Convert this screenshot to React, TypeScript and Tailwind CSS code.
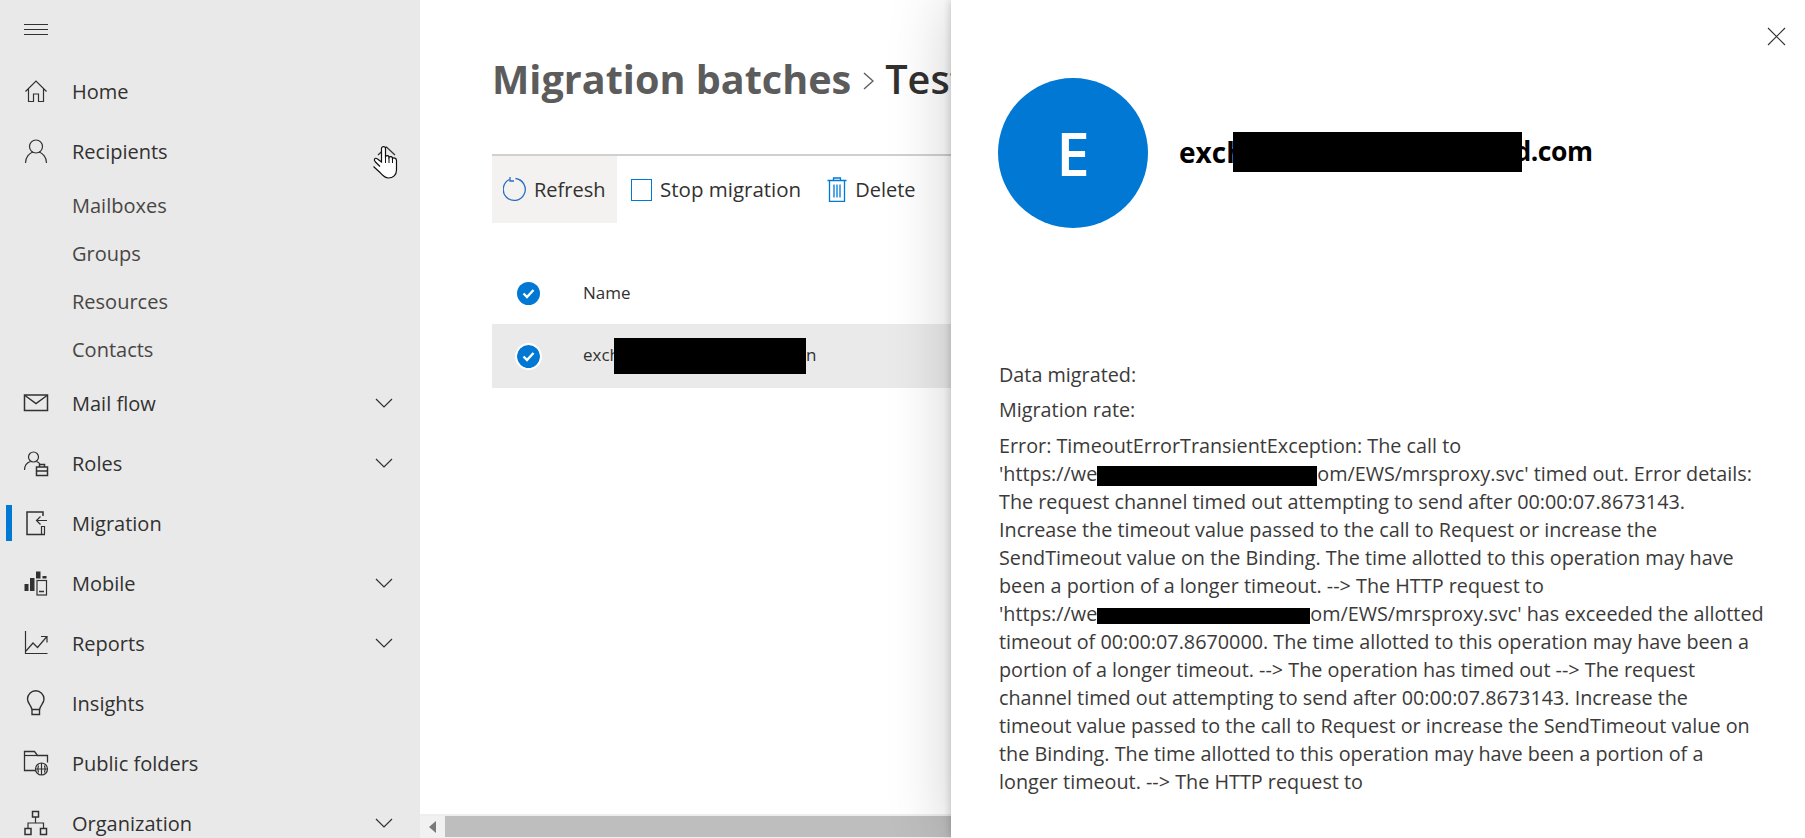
const Chevron = () => (
  <svg width="18" height="10" viewBox="0 0 18 10" fill="none" stroke="#323130" strokeWidth="1.2">
    <path d="M1 1l8 8 8-8" />
  </svg>
);

const icon = "h-6 w-6 shrink-0 overflow-visible";
const stroke = { fill: "none", stroke: "#323130", strokeWidth: 1.2 };

const HomeIcon = () => (
  <svg className={icon} viewBox="0 0 24 24" {...stroke}>
    <path d="M1.500 12.500L12 2l10.500 10.500M4.500 10v12.500h5V15h5v7.500h5V10" />
  </svg>
);
const PersonIcon = () => (
  <svg className={icon} viewBox="0 0 24 24" {...stroke}>
    <circle cx="12" cy="7.500" r="6.500" />
    <path d="M1.500 24c0-6 4-10 7.500-11M22.500 24c0-6-4-10-7.500-11" />
  </svg>
);
const MailIcon = () => (
  <svg className={icon} viewBox="0 0 24 24" fill="none" stroke="#323130" strokeWidth="1.500">
    <rect x="0.500" y="4" width="23" height="15.500" />
    <path d="M1 4.500l11 8 11-8" />
  </svg>
);
const RolesIcon = () => (
  <svg className={icon} viewBox="0 0 24 24" {...stroke}>
    <circle cx="9.500" cy="6" r="5" />
    <path d="M0.500 19c0-5 3-7.500 6-8.500M12.500 10.500c1.500.5 2.500 1.200 3.500 2.500" />
    <rect x="12.500" y="16" width="11" height="8.500" strokeWidth="1.500" />
    <path d="M15.500 16v-2.500h5V16M12.500 20h11" strokeWidth="1.500" />
  </svg>
);
const MigrationIcon = () => (
  <svg className={icon} viewBox="0 0 24 24" {...stroke}>
    <path d="M19 5V1H3v22.500h18" strokeWidth="1.500" />
    <path d="M23 9.500H12.500M16.500 5.500l-4 4 4 4" />
    <path d="M17.500 23v-7.500h3V23" />
  </svg>
);
const MobileIcon = () => (
  <svg className={icon} viewBox="0 0 24 24">
    <rect x="0.500" y="13" width="4" height="7" fill="#323130" />
    <rect x="6" y="7" width="4.500" height="13" fill="#323130" />
    <rect x="12" y="0.500" width="4.500" height="7" fill="#323130" />
    <rect x="18.500" y="5" width="4" height="2.500" fill="#323130" />
    <rect x="13" y="9.500" width="9.500" height="14.500" fill="none" stroke="#323130" strokeWidth="1.200" />
    <path d="M15 20.500h5" stroke="#323130" strokeWidth="1.500" />
  </svg>
);
const ReportsIcon = () => (
  <svg className={icon} viewBox="0 0 24 24" {...stroke}>
    <path d="M1.500 0v22.500h22" />
    <path d="M2 20l7-8 4.500 4.500L22.500 6M17 5.500h6v6" />
  </svg>
);
const BulbIcon = () => (
  <svg className={icon} viewBox="0 0 24 24" {...stroke}>
    <path d="M8 18.500C7 14 3.500 12.500 3.500 8a8.200 8.200 0 0 1 16.500 0c0 4.500-3.500 6-4.500 10.500z" strokeWidth="1.400" />
    <path d="M8 18.500v5h7.500v-5" strokeWidth="1.400" />
  </svg>
);
const FolderIcon = () => (
  <svg className={icon} viewBox="0 0 24 24" {...stroke}>
    <path d="M12 19.500H0.500V0.500h10l3 4h10v7" strokeWidth="1.300" />
    <path d="M0.500 4.500h13" />
    <circle cx="17.500" cy="18" r="6" />
    <path d="M11.500 18h12M17.500 12v12M14.500 14.500c-1 2.500-1 4.500 0 7M20.500 14.500c1 2.500 1 4.500 0 7" />
  </svg>
);
const OrgIcon = () => (
  <svg className={icon} viewBox="0 0 24 24" fill="none" stroke="#323130" strokeWidth="1.500">
    <rect x="8.500" y="0.500" width="6" height="5.500" />
    <rect x="1" y="17.500" width="6" height="6" />
    <rect x="16.500" y="17.500" width="6" height="6" />
    <path d="M11.500 6v6M4 17.500V12h15.500v5.500" strokeWidth="1.200" />
  </svg>
);

const rowBase = "flex h-[60px] items-center pl-6 pr-[27px] text-[20px] text-[#323130]";

function NavRow({ label, children, more, active }: { label: string; children: React.ReactNode; more?: boolean; active?: boolean }) {
  return (
    <div className={rowBase}>
      {active ? <div className="-ml-[18px] mr-3 h-9 w-1.5 bg-[#0078d4]" /> : null}
      {children}
      <span className="ml-6 flex-1 pt-0.5">{label}</span>
      {more ? <Chevron /> : null}
    </div>
  );
}

const subItems = ["Mailboxes", "Groups", "Resources", "Contacts"];

const errorLines: React.ReactNode[] = [
  "Error: TimeoutErrorTransientException: The call to",
  <>
    'https://we<span className="inline-block h-5 w-[220px] bg-black align-middle" />om/EWS/mrsproxy.svc' timed out. Error details:
  </>,
  "The request channel timed out attempting to send after 00:00:07.8673143.",
  "Increase the timeout value passed to the call to Request or increase the",
  "SendTimeout value on the Binding. The time allotted to this operation may have",
  "been a portion of a longer timeout. --> The HTTP request to",
  <>
    'https://we<span className="inline-block h-4 w-[213px] bg-black align-middle" />om/EWS/mrsproxy.svc' has exceeded the allotted
  </>,
  "timeout of 00:00:07.8670000. The time allotted to this operation may have been a",
  "portion of a longer timeout. --> The operation has timed out --> The request",
  "channel timed out attempting to send after 00:00:07.8673143. Increase the",
  "timeout value passed to the call to Request or increase the SendTimeout value on",
  "the Binding. The time allotted to this operation may have been a portion of a",
  "longer timeout. --> The HTTP request to",
];

const CheckCircle = ({ ring }: { ring?: boolean }) => (
  <div className={`flex h-[23px] w-[23px] items-center justify-center rounded-full bg-[#0078d4] ${ring ? "outline-2 outline-white" : ""}`}>
    <svg width="13" height="11" viewBox="0 0 13 11" fill="none" stroke="white" strokeWidth="2.400">
      <path d="M1.500 5.500l3.500 3.500 6.500-7" />
    </svg>
  </div>
);

export default function App() {
  return (
    <div className="relative flex h-screen w-full overflow-hidden bg-white font-['Open_Sans',sans-serif]">
      <aside className="relative h-full w-[420px] shrink-0 overflow-hidden bg-[#e9e9e9]">
        <div className="flex h-[61px] items-start pl-6 pt-6">
          <div className="flex h-[11px] w-6 flex-col justify-between">
            <div className="h-px bg-[#323130]" />
            <div className="h-px bg-[#323130]" />
            <div className="h-px bg-[#323130]" />
          </div>
        </div>
        <NavRow label="Home"><HomeIcon /></NavRow>
        <NavRow label="Recipients"><PersonIcon /></NavRow>
        {subItems.map((s) => (
          <div key={s} className="flex h-12 items-center pl-[72px] pt-0.5 text-[20px] text-[#484644]">{s}</div>
        ))}
        <NavRow label="Mail flow" more><MailIcon /></NavRow>
        <NavRow label="Roles" more><RolesIcon /></NavRow>
        <NavRow label="Migration" active><MigrationIcon /></NavRow>
        <NavRow label="Mobile" more><MobileIcon /></NavRow>
        <NavRow label="Reports" more><ReportsIcon /></NavRow>
        <NavRow label="Insights"><BulbIcon /></NavRow>
        <NavRow label="Public folders"><FolderIcon /></NavRow>
        <NavRow label="Organization" more><OrgIcon /></NavRow>
        {/* mouse pointer caught in the capture */}
        <svg className="absolute left-[372px] top-[145px]" width="26" height="34" viewBox="0 0 26 34">
          <path d="M6 10l8.500-8 8.500 8" fill="none" stroke="#323130" strokeWidth="1.200" />
          <path
            d="M8 21.500L3.500 17C1 14.500 3 12 5.500 14L9.500 17V3.500C9.500 1 13.500 1 13.500 3.500V11.500C15 10 17 10.500 17 12.500C18 11 20.500 11.500 20.500 13.500C21.500 12.500 24.500 13 24.500 15.500V25C24.500 30 21 33 16.500 33C12.500 33 10.500 30.500 8 27.500L1.500 21.500"
            fill="white"
            stroke="#111"
            strokeWidth="1.200"
          />
          <path d="M13.500 11.500V18M17 12.500V18M20.500 13.500V18" stroke="#111" strokeWidth="1" />
        </svg>
      </aside>

      <main className="flex h-full min-w-0 flex-1 flex-col">
        <div className="min-h-0 flex-1 overflow-hidden pl-[72px]">
          <div className="flex h-[154px] items-start whitespace-nowrap pt-[49px] text-[39.6px] leading-[60px]">
            <span className="font-bold text-[#5c5c5c]">Migration batches</span>
            <svg className="ml-3 mr-[11px] mt-[23px]" width="11" height="18" viewBox="0 0 11 18" fill="none" stroke="#605e5c" strokeWidth="1.400">
              <path d="M1 1l9 8-9 8" />
            </svg>
            <span className="font-semibold text-[#323130]">Test migration</span>
          </div>
          <div className="flex h-[69px] items-stretch border-t-2 border-[#d2d0ce] text-[20px] text-[#323130]">
            <div className="flex w-[125px] items-center bg-[#f3f2f1] pl-[11px]">
              <svg width="25" height="25" viewBox="0 0 25 25" fill="none" stroke="#2b6cc4" strokeWidth="1.300">
                <path d="M6.500 2.500a11 11 0 1 0 6-1" />
                <path d="M7 0v4h4" />
              </svg>
              <span className="ml-1.5">Refresh</span>
            </div>
            <div className="ml-3.5 flex items-center">
              <div className="h-[22px] w-[21px] border-[1.5px] border-[#0078d4]" />
              <span className="ml-2 text-[20.5px]">Stop migration</span>
            </div>
            <div className="ml-[26px] flex items-center">
              <svg width="20" height="25" viewBox="0 0 20 25" fill="none" stroke="#0078d4" strokeWidth="1.300">
                <path d="M0.500 3.500h19M6.500 3.500V1h7v2.500M2.500 3.500v21h15v-21M7 7.500v13M10 7.500v13M13 7.500v13" />
              </svg>
              <span className="ml-2">Delete</span>
            </div>
          </div>
          <div className="mt-10 flex h-[61px] items-center pl-[25px] text-[17px] text-[#323130]">
            <CheckCircle />
            <span className="ml-[43px] pb-0.5">Name</span>
          </div>
          <div className="flex h-16 items-center bg-[#ebeaea] pl-[25px] text-[17px] text-[#323130]">
            <CheckCircle ring />
            <span className="ml-[43px] flex items-center">
              <span className="pb-0.5">exch</span>
              <span className="-ml-1.5 h-9 w-[192px] bg-black" />
              <span className="pb-0.5">n</span>
            </span>
          </div>
        </div>
        {/* horizontal scrollbar */}
        <div className="flex h-6 shrink-0 items-stretch border-t-2 border-[#eeeeee] bg-[#f1f1f1] pb-px">
          <div className="flex w-[25px] items-center justify-center">
            <div className="h-0 w-0 border-y-[6px] border-r-[7px] border-y-transparent border-r-[#7a7a7a]" />
          </div>
          <div className="flex-1 bg-[#bebebe]" />
        </div>
      </main>

      <section className="absolute bottom-0 right-0 top-0 w-[854px] bg-white shadow-[0_0_60px_rgba(0,0,0,0.2),0_0_8px_rgba(0,0,0,0.2)]">
        <svg className="absolute left-[816px] top-[27px]" width="19" height="19" viewBox="0 0 19 19" fill="none" stroke="#323130" strokeWidth="1.100">
          <path d="M1 1l17 17M18 1L1 18" />
        </svg>
        <div className="flex items-center pl-[47px] pt-[78px]">
          <div className="flex h-[150px] w-[150px] items-center justify-center rounded-full bg-[#0078d4] text-[60px] font-semibold text-white">E</div>
          <div className="-mt-0.5 ml-[31px] flex items-center text-[28px] font-bold text-black">
            exch
            <span className="relative z-10 -ml-3 -mr-[7px] h-10 w-[289px] bg-black" />
            <span className="text-[26.5px] tracking-[-0.5px]">d.com</span>
          </div>
        </div>
        <div className="mt-[133px] pl-12 text-[19.8px] leading-7 text-[#3b3a39]">
          <p>Data migrated:</p>
          <p className="mt-[7px]">Migration rate:</p>
          <div className="mt-2">
            {errorLines.map((line, i) => (
              <div key={i} className="whitespace-nowrap">{line}</div>
            ))}
          </div>
        </div>
      </section>
    </div>
  );
}
